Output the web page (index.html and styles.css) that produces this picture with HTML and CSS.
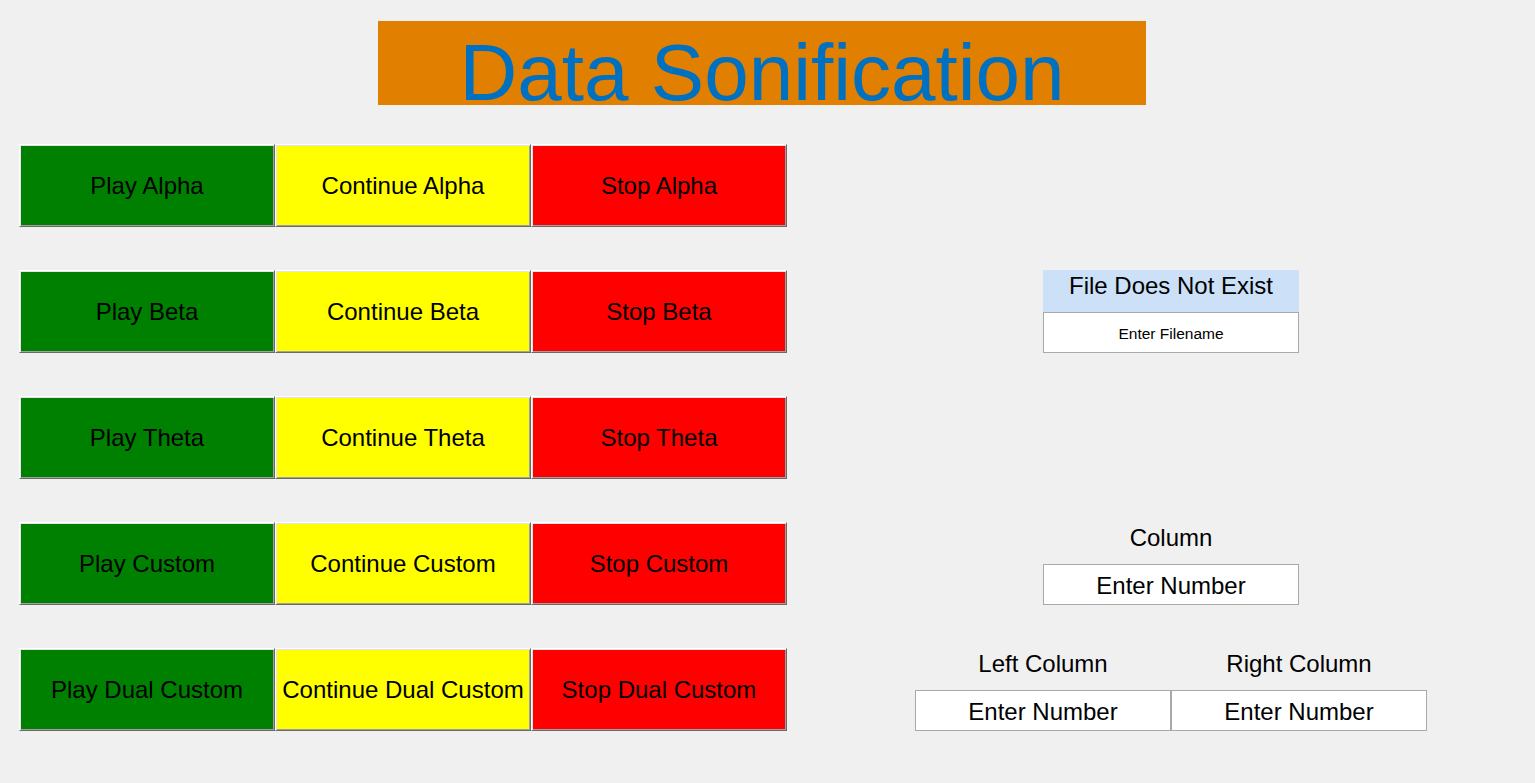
FILE: index.html
```html
<!DOCTYPE html>
<html>
<head>
<meta charset="utf-8">
<title>Data Sonification</title>
<link rel="stylesheet" href="styles.css">
</head>
<body>
<div class="app">
  <header class="title-bar"><h1 class="title">Data Sonification</h1></header>
  <main class="board">
    <button class="btn play r1">Play Alpha</button>
    <button class="btn cont r1">Continue Alpha</button>
    <button class="btn stop r1">Stop Alpha</button>

    <button class="btn play r2">Play Beta</button>
    <button class="btn cont r2">Continue Beta</button>
    <button class="btn stop r2">Stop Beta</button>
    <div class="field field-file r2">
      <div class="label label-status">File Does Not Exist</div>
      <input class="entry entry-small" type="text" value="Enter Filename">
    </div>

    <button class="btn play r3">Play Theta</button>
    <button class="btn cont r3">Continue Theta</button>
    <button class="btn stop r3">Stop Theta</button>

    <button class="btn play r4">Play Custom</button>
    <button class="btn cont r4">Continue Custom</button>
    <button class="btn stop r4">Stop Custom</button>
    <div class="field field-col r4">
      <div class="label">Column</div>
      <input class="entry" type="text" value="Enter Number">
    </div>

    <button class="btn play r5">Play Dual Custom</button>
    <button class="btn cont r5">Continue Dual Custom</button>
    <button class="btn stop r5">Stop Dual Custom</button>
    <div class="field field-left r5">
      <div class="label">Left Column</div>
      <input class="entry" type="text" value="Enter Number">
    </div>
    <div class="field field-right r5">
      <div class="label">Right Column</div>
      <input class="entry" type="text" value="Enter Number">
    </div>
  </main>
</div>
</body>
</html>
```

FILE: styles.css
```css
html, body {
  margin: 0;
  padding: 0;
  background: #f0f0f0;
}

body {
  font-family: "Liberation Sans", Arial, sans-serif;
  color: #000;
}

.app {
  width: 1524px;
  height: 783px;
  padding-top: 21px;
  box-sizing: border-box;
}

.title-bar {
  width: 768px;
  height: 84px;
  margin: 0 auto;
  background: #e07f00;
  text-align: center;
  box-sizing: border-box;
  padding-top: 20px;
}

.title {
  margin: 0;
  font-weight: normal;
  font-size: 80px;
  line-height: 64px;
  color: #0070c0;
  white-space: nowrap;
}

.board {
  display: grid;
  grid-template-columns: 256px 256px 256px 128px 256px 256px;
  grid-template-rows: repeat(5, 83px);
  row-gap: 43px;
  margin-top: 39px;
  padding-left: 19px;
}

.r1 { grid-row: 1; }
.r2 { grid-row: 2; }
.r3 { grid-row: 3; }
.r4 { grid-row: 4; }
.r5 { grid-row: 5; }

.btn {
  margin: 0;
  padding: 0;
  font-family: "Liberation Sans", Arial, sans-serif;
  font-size: 24px;
  color: #000;
  border: 1px solid;
  border-color: #ffffff #696969 #696969 #ffffff;
  box-shadow: inset 1px 1px 0 #e3e3e3, inset -1px -1px 0 #a0a0a0;
  display: flex;
  align-items: center;
  justify-content: center;
  white-space: nowrap;
}

.play { grid-column: 1; background: #008000; }
.cont { grid-column: 2; background: #ffff00; }
.stop { grid-column: 3; background: #ff0000; }

.field {
  display: flex;
  flex-direction: column;
  width: 256px;
}

.field-file, .field-col {
  grid-column: 5 / 7;
  justify-self: center;
}

.field-left { grid-column: 5; }
.field-right { grid-column: 6; }

.label {
  height: 42px;
  line-height: 32px;
  font-size: 24px;
  text-align: center;
  white-space: nowrap;
}

.label-status {
  background: #cce0f8;
}

.entry {
  display: block;
  width: 256px;
  height: 41px;
  box-sizing: border-box;
  margin: 0;
  padding: 2px 0 0 0;
  border: 1px solid #a9a9a9;
  background: #ffffff;
  font-family: "Liberation Sans", Arial, sans-serif;
  font-size: 24px;
  color: #000;
  text-align: center;
  outline: none;
}

.entry-small {
  font-size: 15.5px;
}
```
